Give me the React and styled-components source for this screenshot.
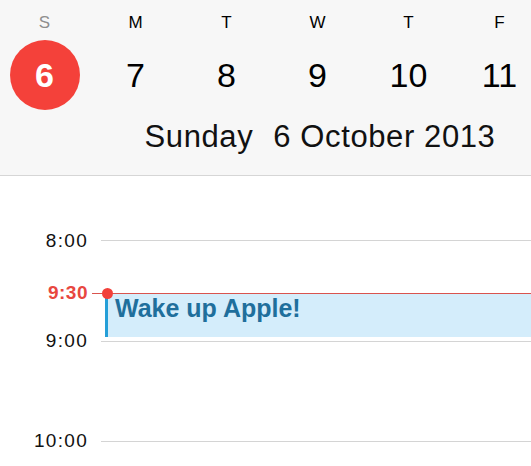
import React from 'react'
import styled, { createGlobalStyle } from 'styled-components'

const GlobalStyle = createGlobalStyle`
    html, body {
        margin: 0;
        padding: 0;
        background: #fff;
    }
    body {
        font-family: "Liberation Sans", Arial, sans-serif;
        overflow: hidden;
    }
`;

const Screen = styled.div`
    width: 531px;
    height: 466px;
    overflow: hidden;
    position: relative;
    background: #fff;
`;

const Header = styled.header`
    width: 640px;
    height: 175px;
    background: #f7f7f7;
    border-bottom: 1px solid #d6d6d6;
`;

const Week = styled.div`
    display: grid;
    grid-template-columns: repeat(6, 91px);
    margin-left: -1px;
`;

const DayLetter = styled.div`
    height: 40px;
    padding-top: 14px;
    box-sizing: border-box;
    text-align: center;
    font-size: 17px;
    line-height: 17px;
    color: ${p => (p.weekend ? '#8e8e8e' : '#000')};
`;

const DayCell = styled.div`
    height: 70px;
    display: flex;
    align-items: center;
    justify-content: center;
`;

const DayNumber = styled.div`
    width: 70px;
    height: 70px;
    border-radius: 50%;
    display: flex;
    align-items: center;
    justify-content: center;
    font-size: 34px;
    background: ${p => (p.selected ? '#f4413a' : 'transparent')};
    color: ${p => (p.selected ? '#fff' : '#000')};
    font-weight: ${p => (p.selected ? 'bold' : 'normal')};
`;

const DateLine = styled.div`
    display: flex;
    justify-content: center;
    gap: 20px;
    font-size: 31px;
    line-height: 31px;
    padding-top: 11px;
    letter-spacing: 0.6px;
    color: #111;
`;

const Timeline = styled.div`
    position: relative;
    padding-top: 14px;
`;

const HourRow = styled.div`
    height: ${p => p.h}px;
    display: flex;
    align-items: center;
`;

const HourLabel = styled.span`
    width: 88px;
    text-align: right;
    font-size: 19px;
    letter-spacing: 1.3px;
    margin-right: -1px;
    color: #111;
`;

const HourLine = styled.div`
    flex: 1;
    height: 1px;
    margin-left: 14px;
    background: #d4d4d4;
`;

const NowMarker = styled.div`
    position: absolute;
    left: 0;
    right: 0;
    top: 102px;
    height: 30px;
    display: flex;
    align-items: center;
    z-index: 2;
`;

const NowLabel = styled.span`
    width: 88px;
    text-align: right;
    font-size: 19px;
    font-weight: bold;
    letter-spacing: 0.5px;
    color: #e8473f;
`;

const NowLine = styled.div`
    flex: 1;
    height: 1px;
    margin-left: 4px;
    background: #d9544e;
    position: relative;

    &::before {
        content: '';
        position: absolute;
        left: 10px;
        top: -5px;
        width: 11px;
        height: 11px;
        border-radius: 50%;
        background: #f2403a;
    }
`;

const Event = styled.div`
    position: absolute;
    left: 105px;
    right: 0;
    top: 117px;
    height: 44px;
    background: #d4edfb;
    border-left: 3px solid #259fd8;
    box-sizing: border-box;
    padding: 1px 0 0 7px;
    font-size: 25px;
    font-weight: bold;
    color: #1f6f9c;
    z-index: 1;
`;

const days = [
    { letter: 'S', num: 6, weekend: true, selected: true },
    { letter: 'M', num: 7 },
    { letter: 'T', num: 8 },
    { letter: 'W', num: 9 },
    { letter: 'T', num: 10 },
    { letter: 'F', num: 11 },
]

export default function App() {
    return (
        <Screen>
            <GlobalStyle />
            <Header>
                <Week>
                    {days.map((d, i) => (
                        <DayLetter key={'l' + i} weekend={d.weekend}>{d.letter}</DayLetter>
                    ))}
                    {days.map((d, i) => (
                        <DayCell key={'n' + i}>
                            <DayNumber selected={d.selected}>{d.num}</DayNumber>
                        </DayCell>
                    ))}
                </Week>
                <DateLine>
                    <span>Sunday</span>
                    <span>6 October 2013</span>
                </DateLine>
            </Header>
            <Timeline>
                <HourRow h={101}>
                    <HourLabel>8:00</HourLabel>
                    <HourLine />
                </HourRow>
                <HourRow h={100}>
                    <HourLabel>9:00</HourLabel>
                    <HourLine />
                </HourRow>
                <HourRow h={100}>
                    <HourLabel>10:00</HourLabel>
                    <HourLine />
                </HourRow>
                <NowMarker>
                    <NowLabel>9:30</NowLabel>
                    <NowLine />
                </NowMarker>
                <Event>Wake up Apple!</Event>
            </Timeline>
        </Screen>
    )
}
